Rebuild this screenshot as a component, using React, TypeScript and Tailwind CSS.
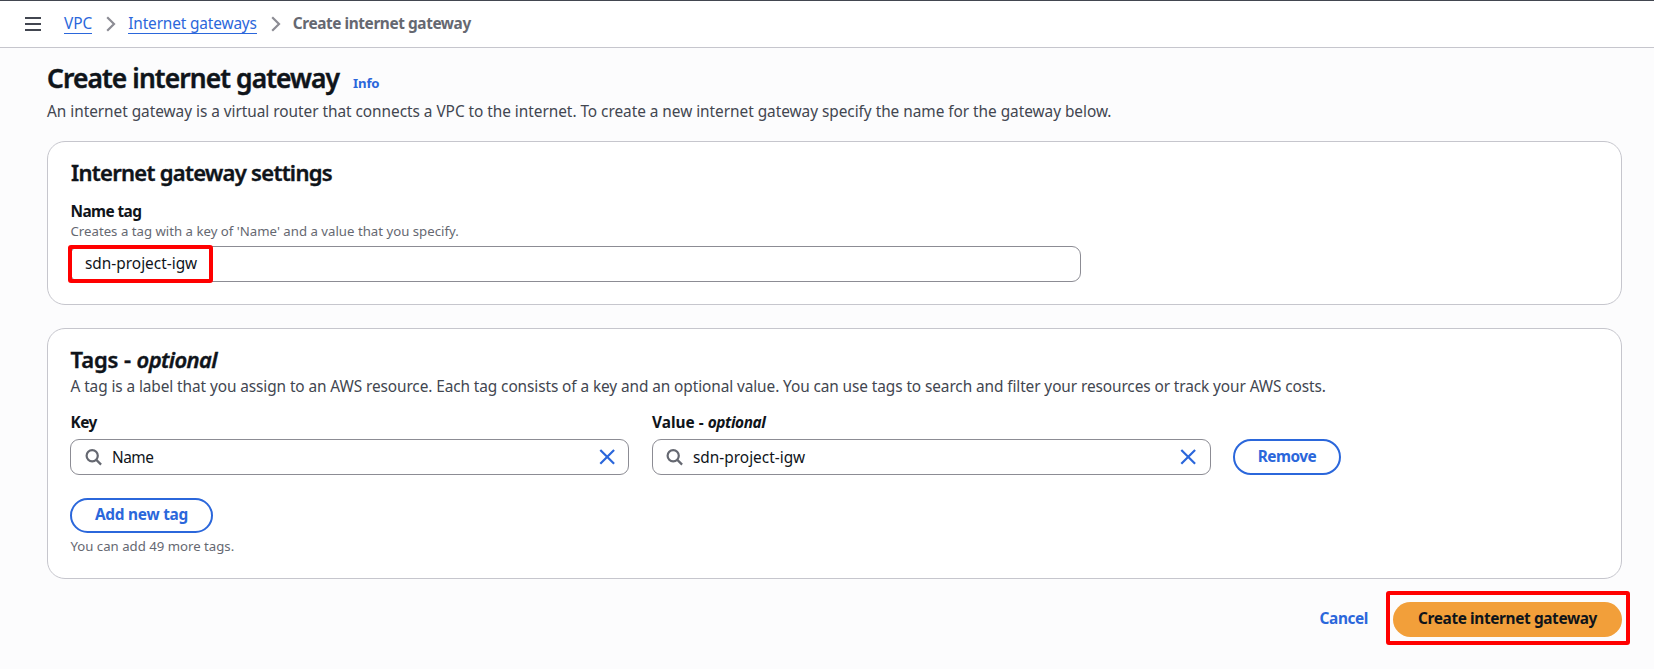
import type { ReactNode } from 'react';

function MenuIcon() {
  return (
    <svg width="16" height="14" viewBox="0 0 16 14" fill="none" stroke="#424650" strokeWidth="2">
      <path d="M0 1h16M0 7h16M0 13h16" />
    </svg>
  );
}

function Chevron() {
  return (
    <svg width="10" height="16" viewBox="0 0 10 16" fill="none" stroke="#8c8c94" strokeWidth="2.2">
      <path d="M1.2 1.2 8 8l-6.800 6.800" />
    </svg>
  );
}

function SearchIcon() {
  return (
    <svg width="18" height="18" viewBox="0 0 18 18" fill="none" stroke="#656871" strokeWidth="2.2" className="shrink-0">
      <circle cx="7.200" cy="7.700" r="5.600" />
      <path d="m11.100 11.600 5 5" />
    </svg>
  );
}

function ClearIcon() {
  return (
    <svg width="16" height="16" viewBox="0 0 16 16" fill="none" stroke="#2b67db" strokeWidth="2.2" className="shrink-0">
      <path d="m1.300 1 13.800 13.800M15.100 1 1.300 14.800" />
    </svg>
  );
}

function Card({ className, children }: { className: string; children: ReactNode }) {
  return (
    <section className={`flex flex-col items-start rounded-[18px] border border-[#c6c6cd] bg-white px-[22px] pt-[17px] ${className}`}>
      {children}
    </section>
  );
}

function SearchField({ value, className }: { value: string; className: string }) {
  return (
    <div className={`flex h-9 w-[559px] items-center rounded-[9px] border border-[#8c8c94] bg-white ${className}`}>
      <SearchIcon />
      <span className="ml-[9px] flex-1 pt-0.5 leading-[22px] text-[#0f141a]">{value}</span>
      <ClearIcon />
    </div>
  );
}

export default function App() {
  return (
    <div className="flex h-[669px] w-[1654px] flex-col overflow-hidden bg-[#fcfcfd] font-['Noto_Sans',sans-serif] text-[15.4px] leading-[22px] whitespace-nowrap text-[#0f141a]">
      <header className="flex h-12 items-center border-t border-b border-t-[#424650] border-b-[#c6c6cd] bg-white pl-[25px]">
        <MenuIcon />
        <nav className="flex items-center pl-[23px]">
          <a className="h-5 border-b border-[#2b67db] leading-[20px] text-[#2b67db]">VPC</a>
          <span className="ml-3.5">
            <Chevron />
          </span>
          <a className="ml-3 h-5 border-b border-[#2b67db] leading-[20px] tracking-[-0.15px] text-[#2b67db]">Internet gateways</a>
          <span className="ml-3.5">
            <Chevron />
          </span>
          <span className="ml-3 font-bold tracking-[-0.42px] text-[#656871]">Create internet gateway</span>
        </nav>
      </header>

      <main className="flex flex-col pt-3.5 pr-8 pl-[47px]">
        <div className="flex h-[33px] items-baseline">
          <h1 className="text-[26.4px] leading-[33px] font-semibold tracking-[-0.9px] [-webkit-text-stroke:0.45px_#0f141a]">Create internet gateway</h1>
          <a className="ml-3.5 text-[13.2px] font-bold tracking-[-0.2px] text-[#2b67db]">Info</a>
        </div>
        <p className="mt-1.5 tracking-[-0.04px] text-[#424650]">
          An internet gateway is a virtual router that connects a VPC to the internet. To create a new internet gateway specify the name for the gateway below.
        </p>

        <Card className="mt-[18px] h-[164px]">
          <h2 className="pl-px text-[22px] leading-[26px] font-semibold tracking-[-0.7px] [-webkit-text-stroke:0.4px_#0f141a]">Internet gateway settings</h2>
          <label className="mt-4 pl-[0.5px] font-bold tracking-[-0.6px]">Name tag</label>
          <p className="-mt-px pl-[0.5px] text-[13.2px] leading-[18px] tracking-[0.01px] text-[#656871]">Creates a tag with a key of 'Name' and a value that you specify.</p>
          <div className="relative mt-1.5 flex h-9 w-[1011px] items-center rounded-[9px] border border-[#8c8c94] bg-white pl-3.5">
            <span>sdn-project-igw</span>
            <div className="absolute top-[-2px] left-[-3px] h-[38px] w-[145px] rounded-[3px] border-4 border-[#ff0000]" />
          </div>
        </Card>

        <Card className="mt-[23px] h-[251px]">
          <h2 className="pl-[0.5px] text-[22px] leading-[26px] font-semibold tracking-[-0.1px] [-webkit-text-stroke:0.4px_#0f141a]">
            Tags - <i className="tracking-[-0.6px]">optional</i>
          </h2>
          <p className="mt-1 pl-[0.5px] tracking-[-0.093px] text-[#424650]">
            A tag is a label that you assign to an AWS resource. Each tag consists of a key and an optional value. You can use tags to search and filter your resources or track your AWS costs.
          </p>
          <div className="mt-3.5 flex items-end">
            <div className="flex flex-col gap-[5px]">
              <label className="pl-[0.5px] font-bold tracking-[-0.5px]">Key</label>
              <SearchField value="Name" className="pr-[13px] pl-3.5 tracking-[-0.5px]" />
            </div>
            <div className="ml-[23px] flex flex-col gap-[5px]">
              <label className="font-bold">
                Value - <i className="tracking-[-0.4px]">optional</i>
              </label>
              <SearchField value="sdn-project-igw" className="pr-3.5 pl-[13px]" />
            </div>
            <button className="ml-[22px] flex h-9 w-[108px] items-center justify-center rounded-full border-2 border-[#2b67db] font-bold tracking-[-0.5px] text-[#2b67db]">
              Remove
            </button>
          </div>
          <button className="mt-[23px] flex h-[35px] w-[143px] items-center justify-center rounded-full border-2 border-[#2b67db] pb-px font-bold tracking-[-0.25px] text-[#2b67db]">
            Add new tag
          </button>
          <p className="mt-1 pl-[0.5px] text-[13.2px] leading-[18px] text-[#656871]">You can add 49 more tags.</p>
        </Card>

        <div className="mt-[23px] flex items-center justify-end">
          <a className="mr-[25px] pb-0.5 font-bold tracking-[-0.4px] text-[#2b67db]">Cancel</a>
          <div className="relative">
            <button className="flex h-[35px] w-[229px] items-center justify-center rounded-full bg-[#f29f3a] pb-0.5 font-bold tracking-[-0.38px]">
              Create internet gateway
            </button>
            <div className="absolute top-[-11px] left-[-7px] h-[54px] w-[244px] rounded-[3px] border-4 border-[#ff0000]" />
          </div>
        </div>
      </main>
    </div>
  );
}
